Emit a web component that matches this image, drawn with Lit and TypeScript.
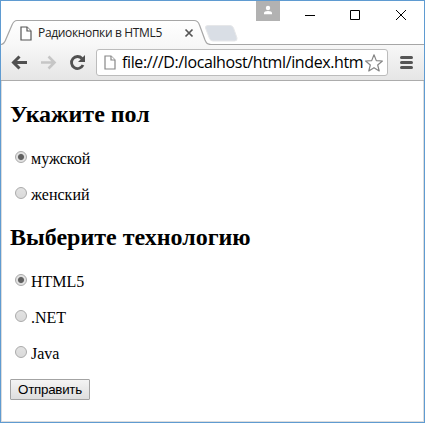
import { LitElement, html, css } from "lit";
import { customElement, property } from "lit/decorators.js";

const fileIcon = html`<svg width="12" height="15" viewBox="0 0 12 15" fill="#fff" stroke="currentColor" stroke-width="1.2">
  <path d="M1 1H7L11 5V14H1Z" /><path d="M7 1V5H11" /></svg>`;

@customElement("browser-tabs")
class BrowserTabs extends LitElement {
  static styles = css`
    :host { display: block; height: 44px; }
    .strip { display: grid; height: 44px; }
    .shape, .row { grid-area: 1 / 1; }
    .shape { display: block; }
    .row { display: flex; align-items: flex-start; justify-content: space-between; }
    .tab { display: flex; align-items: center; height: 24px; margin: 20px 0 0 19px; color: #555; }
    .title { font: 12px/24px "Open Sans", "Noto Sans", sans-serif; color: #222; width: 124px; margin: 0 22px 0 6px; white-space: nowrap; letter-spacing: -0.34px; }
    .controls { display: flex; }
    .controls svg { display: block; }
  `;
  render() {
    return html`<div class="strip">
      <svg class="shape" width="423" height="44" viewBox="1 1 423 44">
        <defs><linearGradient id="tab" x2="0" y2="1"><stop stop-color="#fff" /><stop offset="1" stop-color="#f7f7f7" /></linearGradient></defs>
        <path d="M1 44.500C4 44 5 42 6 39L12 25C13.500 21.500 14.500 20.500 17 20.500H194C197 20.500 198.500 22 199.500 25L205 40C206.500 43.500 207.500 44.500 211 44.500V46H1Z" fill="url(#tab)" />
        <path d="M1 44.500C4 44 5 42 6 39L12 25C13.500 21.500 14.500 20.500 17 20.500H194C197 20.500 198.500 22 199.500 25L205 40C206.500 43.500 207.500 44.500 211 44.500H424" fill="none" stroke="#a6a6a6" stroke-width="1.2" />
        <path d="M208 25.500H230Q232.500 25.500 233.500 28L237 38Q237.500 41 234.500 41H213Q210.500 41 209.500 38.500L205.500 28Q205 25.500 208 25.500Z" fill="#d9dee5" stroke="#e6e7e9" />
      </svg>
      <div class="row">
        <div class="tab">${fileIcon}<span class="title">Радиокнопки в HTML5</span>
          <svg width="10" height="10" viewBox="0 0 10 10"><path d="M1.500 1.500L8.500 8.500M8.500 1.500L1.500 8.500" stroke="#555" stroke-width="1.700" /></svg>
        </div>
        <div class="controls">
          <svg width="168" height="40" viewBox="256 1 168 40">
            <path d="M256 1H280V21H256Z" fill="#b2b2b2" />
            <circle cx="268" cy="8" r="2.200" fill="#fff" /><path d="M264 14.200V13Q264 11 268 11T272 13V14.200Z" fill="#fff" />
            <path d="M305 15.500H315M350.500 10.500H359.500V19.500H350.500ZM396 10L406 20M406 10L396 20" fill="none" stroke="#000" />
          </svg>
        </div>
      </div>
    </div>`;
  }
}

@customElement("browser-toolbar")
class BrowserToolbar extends LitElement {
  static styles = css`
    :host { display: flex; box-sizing: border-box; height: 36px; align-items: flex-start; background: linear-gradient(#f7f7f7, #e6e6e6); border-bottom: 1px solid #acacac; }
    svg { display: block; flex: none; }
    .address { box-sizing: border-box; display: flex; align-items: center; width: 292px; height: 27px; margin-top: 4px; padding: 0 2px 0 7px; border: 1px solid #bcbcbc; border-radius: 3px; background: #fff; color: #888; }
    .url { flex: none; width: 242px; margin-left: 6px; color: #000; font: 16px/25px "Open Sans", "Noto Sans", sans-serif; white-space: nowrap; letter-spacing: -0.38px; }
  `;
  render() {
    return html`
      <svg width="95" height="35" viewBox="1 45 95 35" fill="none" stroke-width="3">
        <path d="M27 62.500H14M19.500 56.500L13.500 62.500L19.500 68.500" stroke="#505050" />
        <path d="M41 62.500H54M48.500 56.500L54.500 62.500L48.500 68.500" stroke="#c6c6c6" stroke-width="2.600" />
        <path d="M82 58.500A6 6 0 1 0 83 65" stroke="#505050" stroke-width="2.800" /><path d="M85 55V62H78Z" fill="#505050" />
      </svg>
      <div class="address">${fileIcon}<span class="url">file:///D:/localhost/html/index.htm</span>
        <svg width="20" height="20" viewBox="0 0 20 20"><path d="M10 1.800L12.300 7.600L18.400 8L13.700 12L15.200 18L10 14.700L4.800 18L6.300 12L1.600 8L7.700 7.600Z" fill="#fff" stroke="#858585" stroke-width="1.200" stroke-linejoin="round" /></svg>
      </div>
      <svg width="35" height="35" viewBox="388 45 35 35"><path d="M401.500 57.500H411.500M401.500 62.500H411.500M401.500 67.500H411.500" stroke="#555" stroke-width="3" stroke-linecap="round" /></svg>`;
  }
}

@customElement("radio-group")
class RadioGroup extends LitElement {
  @property() name = "";
  @property() heading = "";
  @property({ attribute: false }) options: string[] = [];
  static styles = css`
    :host { display: block; color: #000; font-family: "Liberation Serif", serif; }
    h2 { margin: 0 0 20px; font-size: 24px; line-height: 27px; font-weight: bold; }
    .list { display: flex; flex-direction: column; gap: 16px; }
    label { display: flex; height: 20px; font-size: 16px; line-height: 22px; padding-left: 5px; }
    input { appearance: none; box-sizing: border-box; width: 12px; height: 12px; margin: 3px 4px 0 0; border: 1px solid #aaa; border-radius: 50%; background: linear-gradient(#e2e2e2, #dadada); }
    input:checked { background: radial-gradient(circle, #606060 2.500px, #e2e2e2 3.600px); }
  `;
  render() {
    return html`<h2>${this.heading}</h2><div class="list">${this.options.map((o, i) => html`
      <label><input type="radio" name=${this.name} ?checked=${i === 0} />${o}</label>`)}</div>`;
  }
}

@customElement("app-root")
class AppRoot extends LitElement {
  static styles = css`
    :host { display: flex; flex-direction: column; box-sizing: border-box; width: 425px; height: 423px; border: 1px solid #5f9bd1; background: #fff; overflow: hidden; }
    .page { flex: 1; display: flex; flex-direction: column; align-items: flex-start; padding: 20px 8px 0; border: 1px solid #dcdcdc; border-top: 0; }
    .tech { margin-top: 20px; }
    button { box-sizing: border-box; width: 80px; height: 21px; margin: 16px 0 0; padding: 0; border: 1px solid #a3a3a3; border-radius: 1px; background: linear-gradient(#f4f4f4, #dedede); font: 13.333px/19px "Liberation Sans", Arial, sans-serif; letter-spacing: -0.25px; color: #000; }
  `;
  render() {
    return html`<browser-tabs></browser-tabs><browser-toolbar></browser-toolbar>
      <main class="page">
        <radio-group name="sex" heading="Укажите пол" .options=${["мужской", "женский"]}></radio-group>
        <radio-group class="tech" name="tech" heading="Выберите технологию" .options=${["HTML5", ".NET", "Java"]}></radio-group>
        <button>Отправить</button>
      </main>`;
  }
}
